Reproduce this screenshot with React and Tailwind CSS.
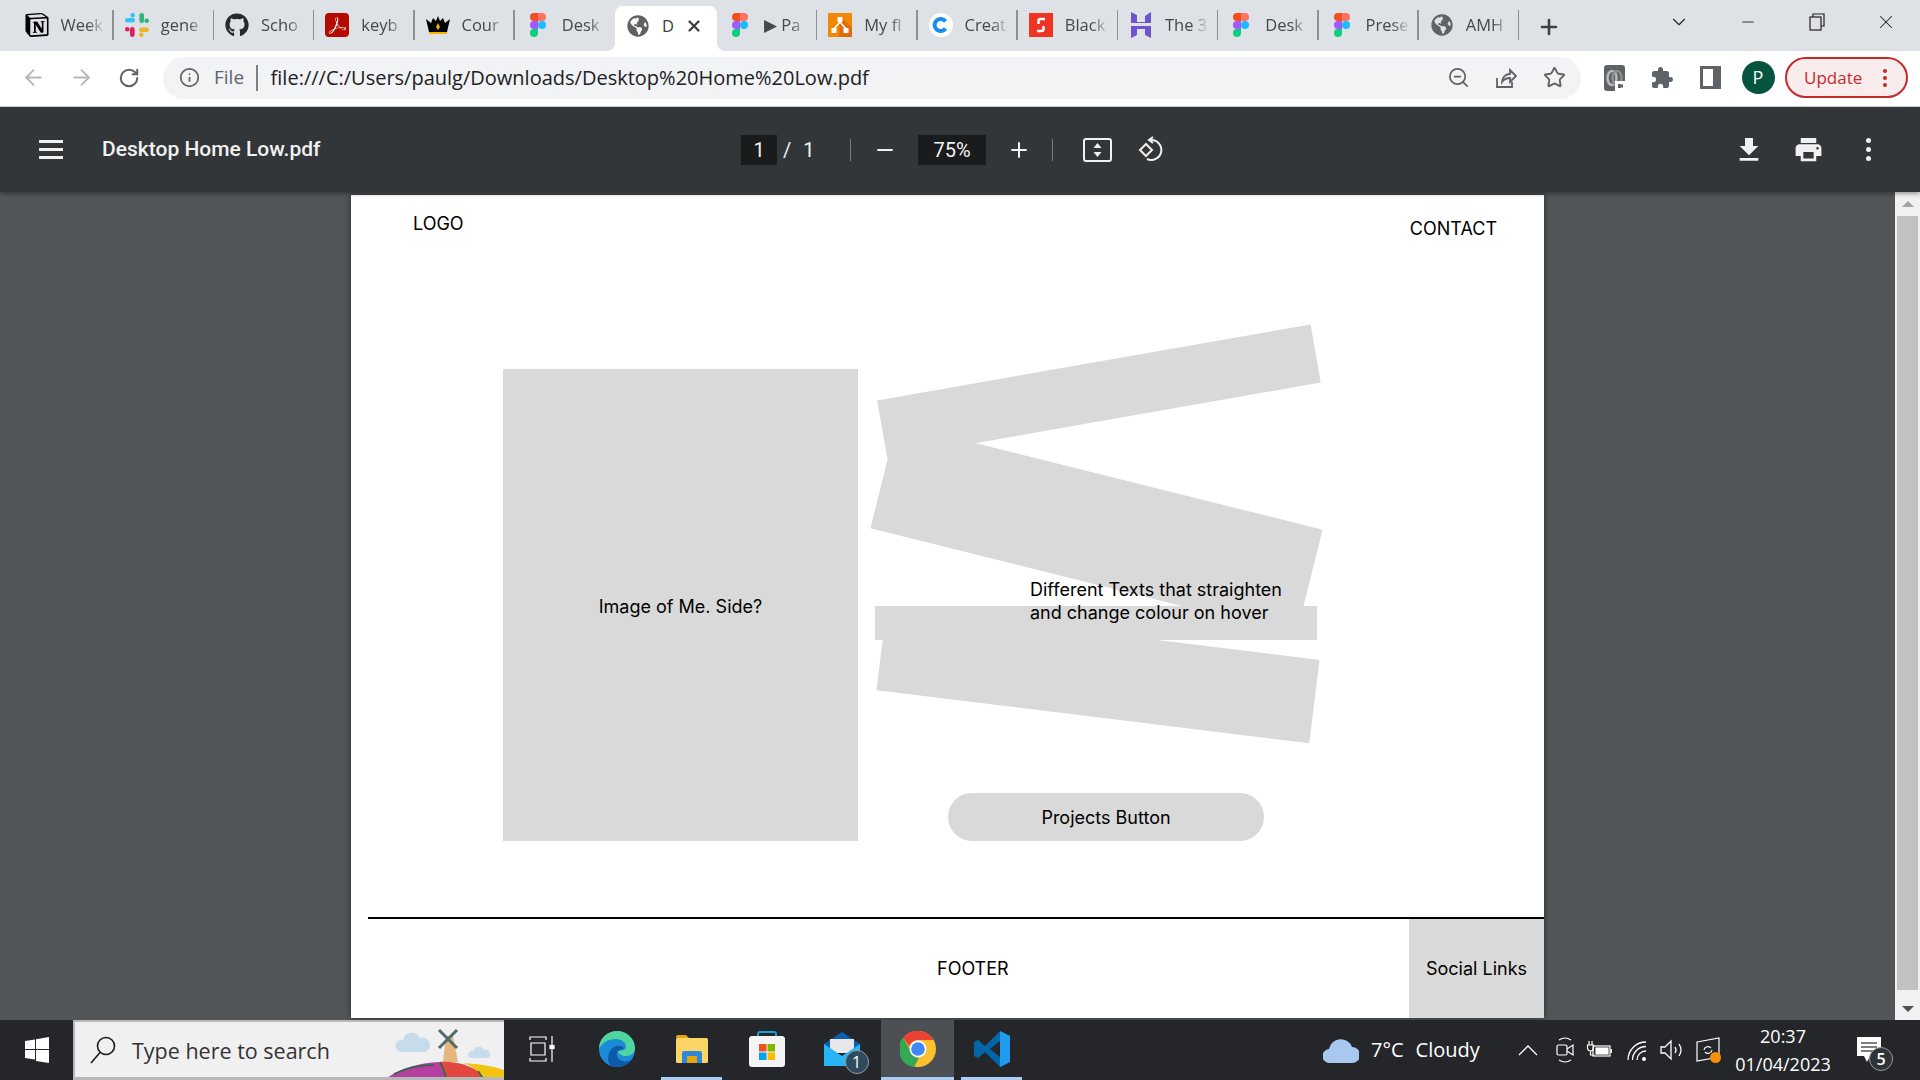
import { ArrowLeft, ArrowRight, RotateCw, Info, ZoomOut, Star, Minus, Plus, X, ChevronDown } from 'lucide-react'
import { FaGithub, FaGlobeAmericas } from 'react-icons/fa'
import { SiNotion, SiAdobeacrobatreader } from 'react-icons/si'

function Figma() {
  return (
    <svg width="16" height="24" viewBox="0 0 38 57">
      <path fill="#1abcfe" d="M19 28.5a9.5 9.5 0 1 1 19 0 9.5 9.5 0 0 1-19 0z" />
      <path fill="#0acf83" d="M0 47.5A9.5 9.5 0 0 1 9.5 38H19v9.5a9.5 9.5 0 1 1-19 0z" />
      <path fill="#ff7262" d="M19 0v19h9.5a9.5 9.5 0 1 0 0-19H19z" />
      <path fill="#f24e1e" d="M0 9.5A9.5 9.5 0 0 0 9.5 19H19V0H9.5A9.5 9.5 0 0 0 0 9.5z" />
      <path fill="#a259ff" d="M0 28.5A9.5 9.5 0 0 0 9.5 38H19V19H9.5A9.5 9.5 0 0 0 0 28.5z" />
    </svg>
  )
}

function Slack() {
  return (
    <svg width="24" height="24" viewBox="0 0 24 24">
      <rect x="0" y="5" width="10" height="4.600" rx="2.300" fill="#36c5f0" />
      <circle cx="7.700" cy="2.300" r="2.300" fill="#36c5f0" />
      <rect x="14.400" y="0" width="4.600" height="10" rx="2.300" fill="#2eb67d" />
      <circle cx="21.700" cy="7.700" r="2.300" fill="#2eb67d" />
      <rect x="14" y="14.400" width="10" height="4.600" rx="2.300" fill="#ecb22e" />
      <circle cx="16.300" cy="21.700" r="2.300" fill="#ecb22e" />
      <rect x="5" y="14" width="4.600" height="10" rx="2.300" fill="#e01e5a" />
      <circle cx="2.300" cy="16.300" r="2.300" fill="#e01e5a" />
    </svg>
  )
}

function Acrobat() {
  return (
    <div className="w-6 h-6 rounded bg-[#b30b00] flex items-center justify-center">
      <SiAdobeacrobatreader size={17} color="#fff" />
    </div>
  )
}

function Crown() {
  return (
    <svg width="24" height="24" viewBox="0 0 24 24">
      <path fill="#000" d="M0 6l5 4 2-5 3 3 2-5 2 5 3-3 2 5 5-4-3 13H3z" />
      <path fill="#f4b400" d="M3 19h18v2H3zM12 10l2 4-2 3-2-3z" />
    </svg>
  )
}

function Flow() {
  return (
    <svg width="24" height="24" viewBox="0 0 24 24">
      <rect width="24" height="24" fill="#f08705" />
      <path fill="#df6c0c" d="M12 4l12 10v10H11z" />
      <path stroke="#fff" strokeWidth="1.500" fill="none" d="M6 16l6-7 6 7" />
      <rect x="9.500" y="4" width="5" height="5" fill="#fff" />
      <rect x="3.500" y="15" width="5" height="5" fill="#fff" />
      <rect x="15.500" y="15" width="5" height="5" fill="#fff" />
    </svg>
  )
}

function Canva() {
  return (
    <svg width="24" height="24" viewBox="0 0 24 24">
      <circle cx="12" cy="12" r="12" fill="#fff" />
      <path d="M16.500 8.500a6 6 0 1 0 0 7" stroke="#1a8cf0" strokeWidth="4" fill="none" />
    </svg>
  )
}

function Blackbox() {
  return (
    <svg width="24" height="24" viewBox="0 0 24 24">
      <rect width="24" height="24" fill="#ee3524" />
      <path stroke="#fff" strokeWidth="2.400" fill="none" d="M16 6h-4.500a2 2 0 0 0-2 2v3M8 18h4.500a2 2 0 0 0 2-2v-3" />
    </svg>
  )
}

function Hostinger() {
  return (
    <svg width="20" height="26" viewBox="0 0 20 26">
      <path fill="#6e55cf" d="M0 0l6 3v7l8 .1V4l6-4v11H0zM0 14h20v12l-6-3v-6H6v6l-6 3z" />
    </svg>
  )
}

const TABS = [
  { icon: <SiNotion size={24} color="#000" />, label: 'Week' },
  { icon: <Slack />, label: 'gene' },
  { icon: <FaGithub size={24} color="#24292e" />, label: 'Scho' },
  { icon: <Acrobat />, label: 'keyb' },
  { icon: <Crown />, label: 'Cour' },
  { icon: <Figma />, label: 'Desk', noSep: true },
  { icon: <FaGlobeAmericas size={22} color="#5f6368" />, label: 'D', active: true },
  { icon: <Figma />, label: '▶ Pa' },
  { icon: <Flow />, label: 'My fl' },
  { icon: <Canva />, label: 'Creat' },
  { icon: <Blackbox />, label: 'Black' },
  { icon: <Hostinger />, label: 'The 3' },
  { icon: <Figma />, label: 'Desk' },
  { icon: <Figma />, label: 'Prese' },
  { icon: <FaGlobeAmericas size={22} color="#5f6368" />, label: 'AMH' },
]

function Tab({ tab }) {
  if (tab.active) {
    return (
      <div className="relative w-[102px] h-[45px] bg-white rounded-t-lg flex items-center pl-[11px] pb-[5px] shrink-0">
        <div className="absolute -left-2 bottom-0 w-2 h-2 bg-white">
          <div className="w-2 h-2 bg-[#dee1e6] rounded-br-lg" />
        </div>
        <div className="absolute -right-2 bottom-0 w-2 h-2 bg-white">
          <div className="w-2 h-2 bg-[#dee1e6] rounded-bl-lg" />
        </div>
        <div className="w-6 flex justify-center">{tab.icon}</div>
        <span className="ml-[12px] text-[#3c4043] text-[16.500px]">{tab.label}</span>
        <X size={18} strokeWidth={3} className="ml-[11px] text-[#3c4043]" />
      </div>
    )
  }
  return (
    <div className="w-[100.250px] h-[30px] mb-[7px] flex items-center shrink-0 relative">
      <div className="w-6 ml-[11px] flex justify-center shrink-0">{tab.icon}</div>
      <span className="ml-[12px] w-[44px] overflow-hidden whitespace-nowrap text-[#45474a] text-[16.500px] [mask-image:linear-gradient(to_right,black_60%,transparent)]">
        {tab.label}
      </span>
      {!tab.noSep && <div className="absolute right-0 top-0 h-[30px] w-[1.500px] bg-[#8d9195]" />}
    </div>
  )
}

function TabStrip() {
  return (
    <div className="h-[51px] bg-[#dee1e6] flex items-end pl-[13.500px] shrink-0">
      <div className="flex items-center h-[45px]">
        {TABS.map((t, i) => (
          <Tab key={i} tab={t} />
        ))}
      </div>
      <div className="w-[62px] h-[45px] flex items-center justify-center ml-[6px] pb-[3px]">
        <Plus size={24} strokeWidth={2.600} className="text-[#3c4043]" />
      </div>
      <div className="flex-1 h-[51px] flex items-center text-[#202124] pb-[8px]">
        <div className="ml-[71px] w-[69px] flex justify-center">
          <ChevronDown size={22} strokeWidth={1.200} />
        </div>
        <div className="w-[69px] flex justify-center">
          <Minus size={18} strokeWidth={1.200} />
        </div>
        <div className="w-[69px] flex justify-center">
          <svg width="16" height="18" viewBox="0 0 16 18" fill="none" stroke="#202124" strokeWidth="1.200">
            <rect x="1" y="4" width="11" height="13" />
            <path d="M4 4V1h11v12h-3" />
          </svg>
        </div>
        <div className="w-[69px] flex justify-center">
          <X size={22} strokeWidth={1.100} />
        </div>
      </div>
    </div>
  )
}

function Cell({ children }) {
  return <div className="w-12 flex justify-center items-center shrink-0">{children}</div>
}

function AddressBar() {
  return (
    <div className="h-[56px] bg-white flex items-center pl-[9px] pb-[2px] shrink-0 border-b border-[#d7d8da] font-['Open_Sans',sans-serif]">
      <Cell><ArrowLeft size={25} strokeWidth={1.800} className="text-[#b4b6b8]" /></Cell>
      <Cell><ArrowRight size={25} strokeWidth={1.800} className="text-[#b4b6b8]" /></Cell>
      <Cell><RotateCw size={22} strokeWidth={2.200} className="text-[#5f6368]" /></Cell>
      <div className="ml-[10px] w-[1418px] h-[42px] rounded-full bg-[#f1f3f4] flex items-center pl-[16px] pr-[3px] shrink-0">
        <Info size={21} strokeWidth={2} className="text-[#5f6368]" />
        <span className="ml-[14px] text-[19px] text-[#5f6368]">File</span>
        <div className="ml-[12px] w-[1.500px] h-[26px] bg-[#7d8084]" />
        <span className="ml-[13px] text-[20px] text-[#202124]">file:///C:/Users/paulg/Downloads/Desktop%20Home%20Low.pdf</span>
        <div className="ml-auto flex">
          <Cell><ZoomOut size={23} strokeWidth={1.800} className="text-[#5f6368]" /></Cell>
          <Cell>
            <svg width="24" height="24" viewBox="0 0 24 24" fill="none" stroke="#5f6368" strokeWidth="1.800">
              <path d="M3 12v9h15v-5M8 16c0-5 4-8 8-8V4l6 6-6 6v-4c-3 0-6 1-8 4z" />
            </svg>
          </Cell>
          <Cell><Star size={23} strokeWidth={2} className="text-[#5f6368]" /></Cell>
        </div>
      </div>
      <div className="ml-[9px] flex shrink-0">
        <Cell>
          <svg width="21" height="26" viewBox="0 0 21 26">
            <rect width="21" height="26" rx="3" fill="#5f6368" />
            <ellipse cx="8" cy="13" rx="4.500" ry="7" fill="none" stroke="#b9babc" strokeWidth="2.500" />
            <ellipse cx="13" cy="13" rx="4.500" ry="7" fill="none" stroke="#8c8e90" strokeWidth="2.500" />
            <rect x="11" y="16" width="10" height="10" fill="#fff" />
            <path fill="#5f6368" d="M14 19h3v1l2-1v4l-2-1v1h-3z" />
          </svg>
        </Cell>
        <Cell>
          <svg width="24" height="24" viewBox="0 0 24 24" fill="#5f6368">
            <path d="M20.500 11H19V7c0-1.100-.9-2-2-2h-4V3.500C13 2.120 11.880 1 10.500 1S8 2.120 8 3.500V5H4c-1.100 0-1.990.9-1.990 2v3.800H3.500c1.490 0 2.700 1.210 2.700 2.700s-1.210 2.700-2.700 2.700H2V20c0 1.100.9 2 2 2h3.800v-1.500c0-1.490 1.210-2.700 2.700-2.700 1.490 0 2.700 1.210 2.700 2.700V22H17c1.100 0 2-.9 2-2v-4h1.500c1.380 0 2.500-1.120 2.500-2.500S21.880 11 20.500 11z" />
          </svg>
        </Cell>
        <Cell>
          <div className="w-[21px] h-[23px] border-[3px] border-r-[8px] border-[#5f6368]" />
        </Cell>
        <Cell>
          <div className="w-[33px] h-[33px] rounded-full bg-[#04543f] text-white text-[18px] flex items-center justify-center">P</div>
        </Cell>
      </div>
      <div className="ml-[3px] w-[123px] h-[41px] rounded-full border-2 border-[#c5292a] bg-[#f9ecec] flex items-center pl-[17px] text-[#c5292a] text-[17px] shrink-0">
        Update
        <div className="ml-[21px] flex flex-col gap-[3px]">
          <div className="w-1 h-1 rounded-full bg-[#c5292a]" />
          <div className="w-1 h-1 rounded-full bg-[#c5292a]" />
          <div className="w-1 h-1 rounded-full bg-[#c5292a]" />
        </div>
      </div>
    </div>
  )
}

function PdfToolbar() {
  return (
    <div className="relative z-10 h-[85px] bg-[#323639] shadow-[0_2px_4px_rgba(0,0,0,0.35)] flex items-center text-[#f1f1f1] font-['Roboto',sans-serif] shrink-0">
      <div className="ml-[39px] w-6 flex flex-col gap-[5px]">
        <div className="h-[3px] bg-[#f1f1f1]" />
        <div className="h-[3px] bg-[#f1f1f1]" />
        <div className="h-[3px] bg-[#f1f1f1]" />
      </div>
      <span className="ml-[39px] w-[216px] text-[21px] font-medium whitespace-nowrap">Desktop Home Low.pdf</span>
      <div className="ml-[423px] w-9 h-[30px] bg-[#191b1c] flex items-center justify-center text-[20px]">1</div>
      <span className="ml-[6px] text-[20px]">/</span>
      <span className="ml-[12px] text-[20px]">1</span>
      <div className="ml-[35px] w-[1.500px] h-[22px] bg-[#7a7d80]" />
      <Minus size={24} strokeWidth={2} className="ml-[22px]" />
      <div className="ml-[21px] w-[68px] h-[30px] bg-[#191b1c] flex items-center justify-center text-[20px]">75%</div>
      <Plus size={24} strokeWidth={2} className="ml-[21px]" />
      <div className="ml-[21px] w-[1px] h-[22px] bg-[#7a7d80]" />
      <svg className="ml-[30px]" width="29" height="24" viewBox="0 0 29 24" fill="none">
        <rect x="1" y="1" width="27" height="22" rx="2" stroke="#f1f1f1" strokeWidth="2" />
        <path fill="#f1f1f1" d="M14.500 5l4 5h-8zM14.500 19l4-5h-8z" />
      </svg>
      <svg className="ml-[25px]" width="28" height="28" viewBox="0 0 28 28" fill="none" stroke="#f1f1f1" strokeWidth="2">
        <path d="M9 8l6 6-6 6-6-6z" />
        <path d="M12 4h2a10 10 0 1 1-4 19" />
        <path d="M16 1l-4 3 4 3" />
      </svg>
      <svg className="ml-[568px]" width="32" height="32" viewBox="0 0 24 24" fill="#f1f1f1">
        <path d="M19 9h-4V3H9v6H5l7 7 7-7zM5 18v2h14v-2H5z" />
      </svg>
      <svg className="ml-[28px]" width="31" height="31" viewBox="0 0 24 24" fill="#f1f1f1">
        <path d="M19 8H5c-1.660 0-3 1.340-3 3v6h4v4h12v-4h4v-6c0-1.660-1.340-3-3-3zm-3 11H8v-5h8v5zm3-7c-.55 0-1-.45-1-1s.45-1 1-1 1 .45 1 1-.45 1-1 1zm-1-9H6v4h12V3z" />
      </svg>
      <div className="ml-[42px] flex flex-col gap-[4px]">
        <div className="w-[5px] h-[5px] rounded-full bg-[#f1f1f1]" />
        <div className="w-[5px] h-[5px] rounded-full bg-[#f1f1f1]" />
        <div className="w-[5px] h-[5px] rounded-full bg-[#f1f1f1]" />
      </div>
    </div>
  )
}

function PdfPage() {
  return (
    <div className="mx-auto mt-[3px] w-[1193px] h-[823px] bg-white shadow-[0_0_6px_rgba(0,0,0,0.5)] text-black text-[18px] font-['Inter',sans-serif] flex flex-col shrink-0 overflow-hidden">
      <header className="h-[174px] flex justify-between pl-[62px] pr-[47px] shrink-0">
        <span className="mt-[15px] h-[22px]">LOGO</span>
        <span className="mt-[20px] h-[22px]">CONTACT</span>
      </header>
      <main className="h-[472px] flex pl-[152px] shrink-0">
        <div className="w-[355px] bg-[#d9d9d9] flex items-center justify-center pt-[2px]">Image of Me. Side?</div>
        <div className="relative flex-1 flex items-end pl-[90px]">
          <div className="absolute left-[20.650px] -top-[6.700px] w-[440px] h-[59.400px] bg-[#d9d9d9] rotate-[-9.950deg]" />
          <div className="absolute left-[18.500px] top-[106.200px] w-[439px] h-[108px] bg-[#d9d9d9] rotate-[14deg]" />
          <div className="absolute left-[22.250px] top-[263.900px] w-[435.500px] h-[84px] bg-[#d9d9d9] rotate-[7deg]" />
          <div className="absolute left-[17px] top-[237px] w-[442px] h-[34px] bg-[#d9d9d9]" />
          <p className="absolute left-[172px] top-[209px] leading-[23px] whitespace-nowrap">
            Different Texts that straighten
            <br />
            and change colour on hover
          </p>
          <button className="relative w-[316px] h-[48px] rounded-full bg-[#d9d9d9] pt-[1px]">Projects Button</button>
        </div>
      </main>
      <footer className="mt-[76px] ml-[17px] h-[101px] border-t-2 border-black flex shrink-0">
        <div className="flex-1 pl-[569px] flex items-center pb-[1px]">FOOTER</div>
        <div className="w-[135px] bg-[#d9d9d9] flex items-center justify-center pb-[1px]">Social Links</div>
      </footer>
    </div>
  )
}

function Scrollbar() {
  return (
    <div className="w-[25px] bg-[#f1f1f1] flex flex-col items-center shrink-0 relative z-0">
      <div className="h-[24px] flex items-center justify-center">
        <div className="w-0 h-0 border-x-[6px] border-x-transparent border-b-[6px] border-b-[#a3a3a3]" />
      </div>
      <div className="w-[21px] h-[774px] bg-[#c1c1c1]" />
      <div className="flex-1 flex items-end pb-[8px]">
        <div className="w-0 h-0 border-x-[6px] border-x-transparent border-t-[6px] border-t-[#505050]" />
      </div>
    </div>
  )
}

function TaskCell({ children, underline, active }) {
  return (
    <div className={`w-[75px] h-full flex shrink-0 ${active ? 'pl-[2px]' : 'px-[7px]'}`}>
      <div
        className={`flex-1 flex items-center justify-center ${underline ? 'border-b-[3px] border-[#a9cdf7]' : 'border-b-[3px] border-transparent'} ${active ? 'bg-[#4c5054]' : ''}`}
      >
        {children}
      </div>
    </div>
  )
}

function SearchArt() {
  return (
    <svg className="absolute right-0 top-0" width="120" height="56" viewBox="0 0 120 56">
      <path fill="#c6dced" d="M16 30a6 6 0 0 1 3-12 9 9 0 0 1 17-2 7 7 0 0 1 5 14z" />
      <path fill="#c6dced" d="M87 36a3.500 3.500 0 0 1 2-7 6 6 0 0 1 11-1 4.500 4.500 0 0 1 4 8z" />
      <path fill="#e4b77e" d="M62 14h7l5 26H59z" />
      <path stroke="#4f6b70" strokeWidth="3" d="M55 8l18 18M73 8L55 26" />
      <path fill="#b43fa0" d="M3 56c12-9 30-15 53-16l6 16z" />
      <path fill="#e2483d" d="M56 40c15-1 28 3 38 9l5 7H62z" />
      <path fill="#f2c40f" d="M80 41c15 1 28 3 40 7v8H99c-3-6-10-11-19-15z" />
      <path fill="none" stroke="#1f6e3a" strokeWidth="1.500" d="M56 40c3 5 5 11 6 16M94 49l5 7M10 52c12-6 26-9 40-9" />
    </svg>
  )
}

function Taskbar() {
  return (
    <div className="h-[60px] bg-[#24262a] flex items-stretch text-white font-['Open_Sans',sans-serif] shrink-0 relative z-10">
      <div className="w-[73px] flex items-center justify-center shrink-0">
        <svg width="24" height="26" viewBox="0 0 24 26" fill="#fff">
          <path d="M0 4l10-1.500V12H0zM11 2.300L24 0v12H11zM0 13h10v9.500L0 21zM11 13h13v13l-13-2z" />
        </svg>
      </div>
      <div className="relative w-[431px] bg-[#f0f0f0] border-2 border-[#b8b8b8] border-r-0 border-b-[3px] flex items-center shrink-0 overflow-hidden">
        <svg className="ml-[15px]" width="26" height="28" viewBox="0 0 26 28" fill="none" stroke="#1a1a1a" strokeWidth="1.600">
          <circle cx="16" cy="10" r="8.500" />
          <path d="M10 16.500L1 27" />
        </svg>
        <span className="ml-[16px] mt-[3px] text-[21.500px] text-[#333]">Type here to search</span>
        <SearchArt />
      </div>
      <TaskCell>
        <svg width="26" height="26" viewBox="0 0 26 26" fill="none" stroke="#fff" strokeWidth="1.200">
          <path d="M1 4V1h16v3M1 22v3h16v-3M2 7h14v12H2zM23 0v9M23 13v13" />
          <rect x="21" y="9.500" width="4" height="3" fill="#fff" />
        </svg>
      </TaskCell>
      <TaskCell>
        <svg width="36" height="36" viewBox="0 0 36 36">
          <circle cx="18" cy="18" r="18" fill="#1b8bd6" />
          <path d="M0 18C0 6 10 0 18 0c10 0 18 8 18 17 0 5-4 8-9 8-4 0-8-2-8-5 4 0 8-1 8-4 0-5-5-8-10-8C9 8 3 12 0 18z" fill="#4fd6a0" />
          <path d="M15 36C6 34 8 18 17 15c4-1 8 1 8 3-5 0-8 3-7 7 1 5 8 7 14 4-4 5-10 8-17 7z" fill="#0f5aa8" />
        </svg>
      </TaskCell>
      <TaskCell underline>
        <svg width="32" height="28" viewBox="0 0 32 28">
          <path fill="#e2a60f" d="M0 2a2 2 0 0 1 2-2h8l3 3h-13z" />
          <rect y="3" width="32" height="25" rx="1.500" fill="#fbd666" />
          <path fill="#2b88d8" d="M6 28V18a2 2 0 0 1 2-2h16a2 2 0 0 1 2 2v10h-5v-7H11v7z" />
          <rect x="11" y="21" width="10" height="7" fill="#e2a60f" />
        </svg>
      </TaskCell>
      <TaskCell>
        <svg width="36" height="36" viewBox="0 0 36 36">
          <path d="M9 6V3a2 2 0 0 1 2-2h14a2 2 0 0 1 2 2v3" fill="none" stroke="#1b9de2" strokeWidth="2" />
          <path fill="#f5f5f5" d="M2 5h32l2 2v26a3 3 0 0 1-3 3H3a3 3 0 0 1-3-3V7z" />
          <rect x="10" y="13" width="7.500" height="7.500" fill="#f25022" />
          <rect x="18.500" y="13" width="7.500" height="7.500" fill="#7fba00" />
          <rect x="10" y="21.500" width="7.500" height="7.500" fill="#00a4ef" />
          <rect x="18.500" y="21.500" width="7.500" height="7.500" fill="#ffb900" />
        </svg>
      </TaskCell>
      <TaskCell>
        <div className="relative">
          <svg width="36" height="34" viewBox="0 0 36 34">
            <path fill="#0a5fae" d="M0 12L18 0l18 12v4H0z" />
            <path fill="#e8e8e8" d="M6 7h24v14H6z" />
            <path fill="#29b6f6" d="M0 12l18 12 18-12v22H0z" />
          </svg>
          <div className="absolute -right-[9px] -bottom-[8px] w-6 h-6 rounded-full border border-[#9a9a9a] bg-[#2e4a5e] text-[16px] flex items-center justify-center">1</div>
        </div>
      </TaskCell>
      <TaskCell underline active>
        <svg width="36" height="36" viewBox="0 0 36 36">
          <circle cx="18" cy="18" r="18" fill="#fbc02d" />
          <path fill="#ea4335" d="M18 0a18 18 0 0 1 15.600 9H18a9 9 0 0 0-8.600 6.500L3 6.500A18 18 0 0 1 18 0z" />
          <path fill="#34a853" d="M3 6.500l7.500 13a9 9 0 0 0 8.500 7.500L14 36A18 18 0 0 1 3 6.500z" />
          <circle cx="18" cy="18" r="8.500" fill="#fff" />
          <circle cx="18" cy="18" r="6.800" fill="#4285f4" />
        </svg>
      </TaskCell>
      <TaskCell underline>
        <svg width="36" height="36" viewBox="0 0 36 36">
          <path fill="#0065a9" d="M26 0l10 5v26l-10 5L11 21l-7 6-4-2v-14l4-2 7 6z" />
          <path fill="#1f9cf0" d="M26 0l10 5v26l-10 5z" />
          <path fill="#24262a" d="M26 10v16l-10-8z" />
        </svg>
      </TaskCell>
      <div className="ml-[294px] w-[187px] flex items-center shrink-0">
        <svg width="36" height="26" viewBox="0 0 36 26">
          <path fill="#a9c8f0" d="M7 26a7 7 0 0 1-1-14 12 12 0 0 1 23-2 8 8 0 0 1 0 16z" />
        </svg>
        <span className="ml-[12px] text-[20px]">7°C</span>
        <span className="ml-[12px] text-[20px]">Cloudy</span>
      </div>
      <div className="w-[36px] flex items-center justify-center shrink-0">
        <svg width="20" height="12" viewBox="0 0 20 12" fill="none" stroke="#fff" strokeWidth="1.300"><path d="M1 11l9-9 9 9" /></svg>
      </div>
      <div className="w-[38px] flex items-center justify-center shrink-0">
        <svg width="18" height="28" viewBox="0 0 18 28" fill="none" stroke="#fff" strokeWidth="1.200">
          <path d="M3 4q6-4 12 0M3 24q6 4 12 0" />
          <rect x="1" y="9" width="10" height="10" rx="1.500" />
          <path d="M11 13l6-4v10l-6-4" />
        </svg>
      </div>
      <div className="w-[30px] flex items-center justify-center shrink-0">
        <svg width="26" height="18" viewBox="0 0 26 18" fill="none" stroke="#fff" strokeWidth="1.200">
          <path d="M3 0v4M6 0v4M1.500 4h6v3a3 3 0 0 1-6 0zM4.500 10v4h4" />
          <rect x="7" y="5" width="17" height="10" />
          <rect x="10" y="7" width="12" height="6" fill="#fff" />
          <rect x="24.500" y="8" width="1.500" height="4" fill="#fff" stroke="none" />
        </svg>
      </div>
      <div className="w-[46px] flex items-center justify-center shrink-0">
        <svg width="20" height="22" viewBox="0 0 20 22" fill="none" stroke="#fff" strokeWidth="1.300">
          <path d="M1 21a18 18 0 0 1 18-18M5.500 21a13.500 13.500 0 0 1 13.500-13.500M10 21a9 9 0 0 1 9-9" />
          <circle cx="17" cy="20" r="1.300" fill="#fff" />
        </svg>
      </div>
      <div className="w-[24px] flex items-center justify-center shrink-0">
        <svg width="24" height="22" viewBox="0 0 24 22" fill="none" stroke="#fff" strokeWidth="1.300">
          <path d="M1 8v6h4l6 6V2L5 8zM15 8q2 3 0 6M19 5q4 6 0 12" />
        </svg>
      </div>
      <div className="w-[48px] flex items-center justify-center shrink-0">
        <div className="relative">
          <svg width="24" height="26" viewBox="0 0 24 26" fill="none" stroke="#fff" strokeWidth="1.200">
            <path d="M1 5l22-4v19L1 24zM8 13a4 4 0 0 1 7-2M16 13a4 4 0 0 1-7 2" />
          </svg>
          <div className="absolute -right-[1px] bottom-[0px] w-[11px] h-[11px] rounded-full bg-[#f78f08]" />
        </div>
      </div>
      <div className="w-[102px] flex flex-col items-center justify-center shrink-0 text-[18px] leading-[28px]">
        <span>20:37</span>
        <span>01/04/2023</span>
      </div>
      <div className="w-[70px] flex items-center justify-center shrink-0">
        <div className="relative">
          <svg width="24" height="26" viewBox="0 0 24 26">
            <path fill="#fff" d="M0 0h24v19H13l-3 6-3-6H0z" />
            <path stroke="#555" strokeWidth="1.500" d="M4 6h16M4 10h16M4 14h12" />
          </svg>
          <div className="absolute -right-[12px] -bottom-[8px] w-6 h-6 rounded-full border border-[#9a9a9a] bg-[#2f3336] text-[16px] flex items-center justify-center font-semibold">5</div>
        </div>
      </div>
    </div>
  )
}

export default function App() {
  return (
    <div className="w-[1920px] h-[1080px] flex flex-col overflow-hidden font-['Open_Sans',sans-serif]">
      <TabStrip />
      <AddressBar />
      <PdfToolbar />
      <div className="h-[828px] flex bg-[#525659] overflow-hidden shrink-0">
        <div className="flex-1 overflow-hidden flex flex-col">
          <PdfPage />
        </div>
        <Scrollbar />
      </div>
      <Taskbar />
    </div>
  )
}
